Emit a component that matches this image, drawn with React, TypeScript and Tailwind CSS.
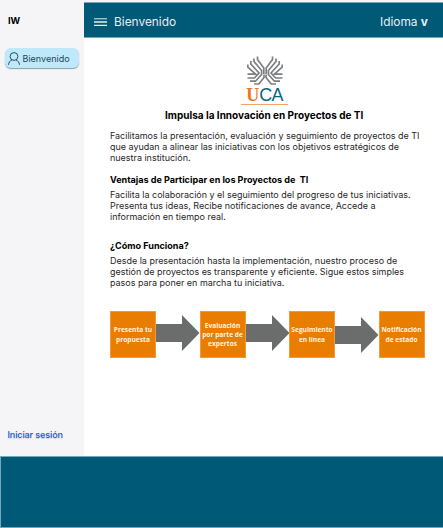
import React from "react";

function MenuIcon() {
  return (
    <svg className="block h-2 w-[13px]" viewBox="0 0 13 8" fill="none">
      <path d="M0 .7H13" stroke="#9dc0cd" strokeWidth="1.4" />
      <path d="M0 4H13M0 7.3H13" stroke="#e5eff2" strokeWidth="1.3" />
    </svg>
  );
}

function UserIcon() {
  return (
    <svg className="block h-[13px] w-3 shrink-0" viewBox="0 0 12 13" fill="none" stroke="#183b49" strokeWidth="0.9">
      <circle cx="6" cy="4.5" r="3.9" />
      <path d="M.5 12.8C.7 10.4 2 8.8 4 7.9M8 7.9c2 .9 3.3 2.5 3.5 4.9" />
    </svg>
  );
}

function EmblemWing() {
  return (
    <>
      <path d="M10.5 .5V3.5L16.8 12V18" />
      <path d="M7 2.5V5.5L14.6 14.5V18.5L8.5 25.2H3" />
      <path d="M3.8 5V8L12 17L7.4 22H.5" />
      <path d="M.8 8.5V11L8.6 18.2H.5" />
      <path d="M17 18.5V21.5L11.8 28H7" />
    </>
  );
}

function Emblem() {
  return (
    <svg className="block h-[29px] w-9" viewBox="0 0 36 29" fill="none" stroke="#7c7f82" strokeWidth="1.7">
      <EmblemWing />
      <g transform="matrix(-1 0 0 1 36 0)">
        <EmblemWing />
      </g>
    </svg>
  );
}

function Logo() {
  return (
    <div className="flex h-[49px] w-[47px] flex-col items-center border-b border-[#f0a56b]">
      <Emblem />
      <div className="flex h-[19px] items-baseline whitespace-nowrap leading-[20px]">
        <span className="font-['Liberation_Serif',serif] text-[18px] font-bold text-[#ed7423]">U</span>
        <span className="font-['Liberation_Sans',sans-serif] text-[18px] tracking-[-0.8px] text-[#0a6482]">CA</span>
      </div>
    </div>
  );
}

function Step({ lines }: { lines: string[] }) {
  return (
    <div className="flex h-[47px] w-[46px] shrink-0 flex-col items-center justify-center border border-[#ef9a40] bg-[#e87d00] font-['Open_Sans',sans-serif] text-[6.6px] font-bold leading-[9.2px] text-[#fff4e4]">
      {lines.map((line) => (
        <span key={line} className="whitespace-nowrap">{line}</span>
      ))}
    </div>
  );
}

function Arrow({ low = false }: { low?: boolean }) {
  return (
    <svg className={low ? "mt-[5.5px] block h-9 w-[43.5px] shrink-0" : "mt-1 block h-9 w-[43.5px] shrink-0"} viewBox="0 0 43.5 36">
      <path d="M0 9H26V0L43.5 18L26 36V27H0Z" fill="#6b6d6c" />
    </svg>
  );
}

function Lines({ lines }: { lines: string[] }) {
  return (
    <p className="whitespace-nowrap text-[8.98px] leading-[11px] text-[#262626]">
      {lines.map((line) => (
        <span key={line} className="block">{line}</span>
      ))}
    </p>
  );
}

export default function App() {
  return (
    <div className="flex h-[528px] w-[443px] flex-col overflow-hidden bg-white font-['Inter',sans-serif]">
      <div className="h-0.5 shrink-0 bg-[#f5f5f8]" />
      <div className="flex h-[454px] shrink-0">
        <aside className="flex w-[84px] shrink-0 flex-col bg-[#f5f5f8]">
          <div className="mt-[13px] pl-2 text-[9.3px] font-bold leading-[12px] text-black">IW</div>
          <div className="ml-[5px] mt-[21px] flex h-5 w-[74px] items-center gap-[3px] whitespace-nowrap rounded-[6px] bg-[#bfe9fb] pl-[2.5px] text-[9px] text-[#234553] shadow-[0_1px_1px_#8e9ba3]">
            <UserIcon />
            <span className="mt-0.5">Bienvenido</span>
          </div>
          <a className="mb-[15px] mt-auto whitespace-nowrap pl-[7.5px] text-[9px] font-medium leading-[12px] tracking-[-0.1px] text-[#0b62d6] [text-shadow:0_1px_1px_#c9cdd8]">Iniciar sesión</a>
        </aside>
        <div className="flex w-[359px] flex-col">
          <header className="flex h-9 shrink-0 items-center border-y border-[#76a8b9] bg-[#005977] pl-2.5 pr-[15px] text-[11.9px] text-[#e4f0f4]">
            <div className="mt-[3px]"><MenuIcon /></div>
            <span className="ml-[7px] mt-[3px]">Bienvenido</span>
            <span className="ml-auto mt-[3px]">Idioma <b>v</b></span>
          </header>
          <main className="flex flex-col pl-[26px]">
            <div className="ml-[131px] mt-[18px]"><Logo /></div>
            <h1 className="mt-[3px] whitespace-nowrap pl-[55px] text-[10px] font-bold leading-[14px] text-black">Impulsa la Innovación en Proyectos de TI</h1>
            <div className="mt-2">
              <Lines lines={["Facilitamos la presentación, evaluación y seguimiento de proyectos de TI", "que ayudan a alinear las iniciativas con los objetivos estratégicos de", "nuestra institución."]} />
            </div>
            <h2 className="mt-[11px] whitespace-pre text-[9.05px] font-bold leading-[12px] text-black">{"Ventajas de Participar en los Proyectos de  TI"}</h2>
            <div className="mt-[3px]">
              <Lines lines={["Facilita la colaboración y el seguimiento del progreso de tus iniciativas.", "Presenta tus ideas, Recibe notificaciones de avance, Accede a", "información en tiempo real."]} />
            </div>
            <h2 className="mt-[18px] text-[9.05px] font-bold leading-[12px] text-black">¿Cómo Funciona?</h2>
            <div className="mt-[3px]">
              <Lines lines={["Desde la presentación hasta la implementación, nuestro proceso de", "gestión de proyectos es transparente y eficiente. Sigue estos simples", "pasos para poner en marcha tu iniciativa."]} />
            </div>
            <div className="mt-[23px] flex">
              <Step lines={["Presenta tu", "propuesta"]} />
              <Arrow />
              <Step lines={["Evaluación", "por parte de", "expertos"]} />
              <Arrow />
              <Step lines={["Seguimiento", "en línea"]} />
              <Arrow low />
              <Step lines={["Notificación", "de estado"]} />
            </div>
          </main>
        </div>
      </div>
      <footer className="h-[72px] shrink-0 border border-r-0 border-[#76a8b9] bg-[#005977]" />
    </div>
  );
}
